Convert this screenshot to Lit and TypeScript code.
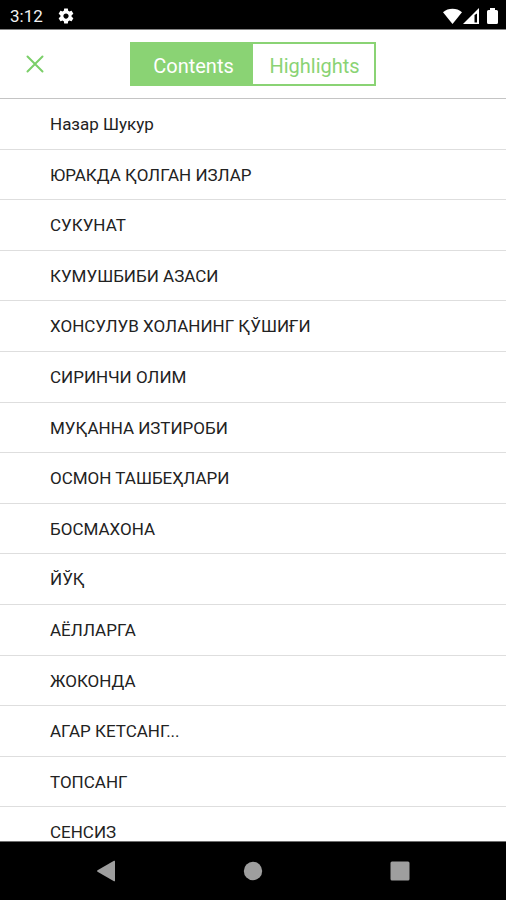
import { LitElement, html, css } from "lit";
import { customElement, state } from "lit/decorators.js";

const CHAPTERS = [
  "Назар Шукур",
  "ЮРАКДА ҚОЛГАН ИЗЛАР",
  "СУКУНАТ",
  "КУМУШБИБИ АЗАСИ",
  "ХОНСУЛУВ ХОЛАНИНГ ҚЎШИҒИ",
  "СИРИНЧИ ОЛИМ",
  "МУҚАННА ИЗТИРОБИ",
  "ОСМОН ТАШБЕҲЛАРИ",
  "БОСМАХОНА",
  "ЙЎҚ",
  "АЁЛЛАРГА",
  "ЖОКОНДА",
  "АГАР КЕТСАНГ...",
  "ТОПСАНГ",
  "СЕНСИЗ",
];

@customElement("status-bar")
class StatusBar extends LitElement {
  static styles = css`
    :host {
      display: flex;
      align-items: center;
      justify-content: space-between;
      box-sizing: border-box;
      height: 30px;
      padding: 2px 8px 0 10px;
      background: #000;
      border-bottom: 1px solid #858585;
      color: #f2f2f2;
      font-size: 17px;
      line-height: 20px;
    }
    .side {
      display: flex;
      align-items: center;
    }
    .left {
      gap: 14px;
    }
    .right {
      gap: 1px;
    }
    .battery {
      margin-left: 7px;
    }
    svg {
      display: block;
      fill: #fff;
    }
  `;

  render() {
    return html`
      <div class="side left">
        <span>3:12</span>
        <svg width="18" height="18" viewBox="0 0 24 24" aria-hidden="true">
          <path
            d="M19.43 12.98c.04-.32.07-.64.07-.98s-.03-.66-.07-.98l2.11-1.65c.19-.15.24-.42.12-.64l-2-3.46c-.12-.22-.39-.3-.61-.22l-2.49 1c-.52-.4-1.08-.73-1.69-.98l-.38-2.65C14.46 2.18 14.25 2 14 2h-4c-.25 0-.46.18-.49.42l-.38 2.65c-.61.25-1.17.59-1.69.98l-2.49-1c-.23-.09-.49 0-.61.22l-2 3.46c-.13.22-.07.49.12.64l2.11 1.65c-.04.32-.07.65-.07.98s.03.66.07.98l-2.11 1.65c-.19.15-.24.42-.12.64l2 3.46c.12.22.39.3.61.22l2.49-1c.52.4 1.08.73 1.69.98l.38 2.65c.03.24.24.42.49.42h4c.25 0 .46-.18.49-.42l.38-2.65c.61-.25 1.17-.59 1.69-.98l2.49 1c.23.09.49 0 .61-.22l2-3.46c.12-.22.07-.49-.12-.64l-2.11-1.65zM12 15.5c-1.93 0-3.5-1.57-3.5-3.5s1.57-3.5 3.5-3.5 3.5 1.57 3.5 3.5-1.57 3.5-3.5 3.5z"
          />
        </svg>
      </div>
      <div class="side right">
        <svg width="19" height="16" viewBox="0 0 19 16" aria-hidden="true">
          <path d="M0 4.2C5.2-.4 13.8-.4 19 4.2L9.5 16z" />
        </svg>
        <svg width="16" height="16" viewBox="0 0 16 16" aria-hidden="true">
          <path fill-rule="evenodd" d="M0 16L16 0V16zM11.500 7V14.500H14V5.500z" />
        </svg>
        <svg class="battery" width="11" height="16" viewBox="0 0 11 16" aria-hidden="true">
          <path d="M3 0H8V2H9.500Q11 2 11 3.500V14.500Q11 16 9.500 16H1.500Q0 16 0 14.500V3.500Q0 2 1.500 2H3z" />
        </svg>
      </div>
    `;
  }
}

@customElement("navigation-bar")
class NavigationBar extends LitElement {
  static styles = css`
    :host {
      display: flex;
      box-sizing: border-box;
      height: 59px;
      padding: 0 33px;
      background: #000;
      border-top: 1px solid #6e6e6e;
    }
    button {
      flex: 1;
      display: grid;
      place-items: center;
      padding: 0;
      border: 0;
      background: none;
    }
    svg {
      display: block;
      fill: #9e9e9e;
    }
  `;

  render() {
    return html`
      <button aria-label="Back">
        <svg width="20" height="22" viewBox="0 0 20 22">
          <path d="M1.500 10.300L18 .8Q19 .3 19 1.300V20.700Q19 21.700 18 21.200L1.500 11.700Q.5 11 1.500 10.300z" />
        </svg>
      </button>
      <button aria-label="Home">
        <svg width="20" height="20" viewBox="0 0 20 20"><circle cx="10" cy="10" r="9.200" /></svg>
      </button>
      <button aria-label="Recent apps">
        <svg width="20" height="20" viewBox="0 0 20 20"><rect x=".5" y=".5" width="19" height="19" rx="1.500" /></svg>
      </button>
    `;
  }
}

@customElement("app-root")
class AppRoot extends LitElement {
  static styles = css`
    :host {
      display: flex;
      flex-direction: column;
      height: 100vh;
      background: #fff;
      font-family: Roboto, "Noto Sans", sans-serif;
    }
    status-bar,
    navigation-bar,
    .header {
      flex: none;
    }
    .header {
      display: grid;
      grid-template-columns: 1fr auto 1fr;
      align-items: center;
      padding: 12px 16px;
      border-bottom: 1px solid #c4c4c4;
    }
    .close {
      justify-self: start;
      padding: 10px;
      border: 0;
      background: none;
    }
    .close svg {
      display: block;
      stroke: #7bcf69;
      stroke-width: 2;
      stroke-linecap: round;
    }
    .tabs {
      display: grid;
      grid-template-columns: 1fr 1fr;
      width: 242px;
      border: 2px solid #8ad374;
      background: #fff;
    }
    .tab {
      height: 40px;
      padding: 4px 0 0 2px;
      border: 0;
      background: none;
      color: #8ad374;
      font: 20px/24px Roboto, "Noto Sans", sans-serif;
    }
    .tab.selected {
      background: #8ad374;
      color: #fff;
    }
    .list {
      flex: 1;
      min-height: 0;
      margin: 0;
      padding: 0;
      list-style: none;
      overflow-y: auto;
      scrollbar-width: none;
    }
    .item {
      display: flex;
      box-sizing: border-box;
      height: 51px;
      border-bottom: 1px solid #dedede;
    }
    .item:nth-child(5n + 2),
    .item:nth-child(5n + 4) {
      height: 50px;
    }
    .link {
      flex: 1;
      display: flex;
      align-items: center;
      padding: 0 50px;
      color: #222;
      font-size: 17px;
      line-height: 20px;
      text-decoration: none;
    }
  `;

  @state() private tab = "Contents";

  render() {
    return html`
      <status-bar></status-bar>
      <header class="header">
        <button class="close" aria-label="Close">
          <svg width="18" height="18" viewBox="0 0 18 18"><path d="M1.500 1.500L16.500 16.500M16.500 1.500L1.500 16.500" /></svg>
        </button>
        <div class="tabs" role="tablist">
          ${["Contents", "Highlights"].map(
            (name) => html`<button
              class="tab ${name === this.tab ? "selected" : ""}"
              role="tab"
              aria-selected=${name === this.tab}
              @click=${() => (this.tab = name)}
            >${name}</button>`
          )}
        </div>
      </header>
      <ul class="list">
        ${CHAPTERS.map((title) => html`<li class="item"><a class="link" href="#">${title}</a></li>`)}
      </ul>
      <navigation-bar></navigation-bar>
    `;
  }
}
